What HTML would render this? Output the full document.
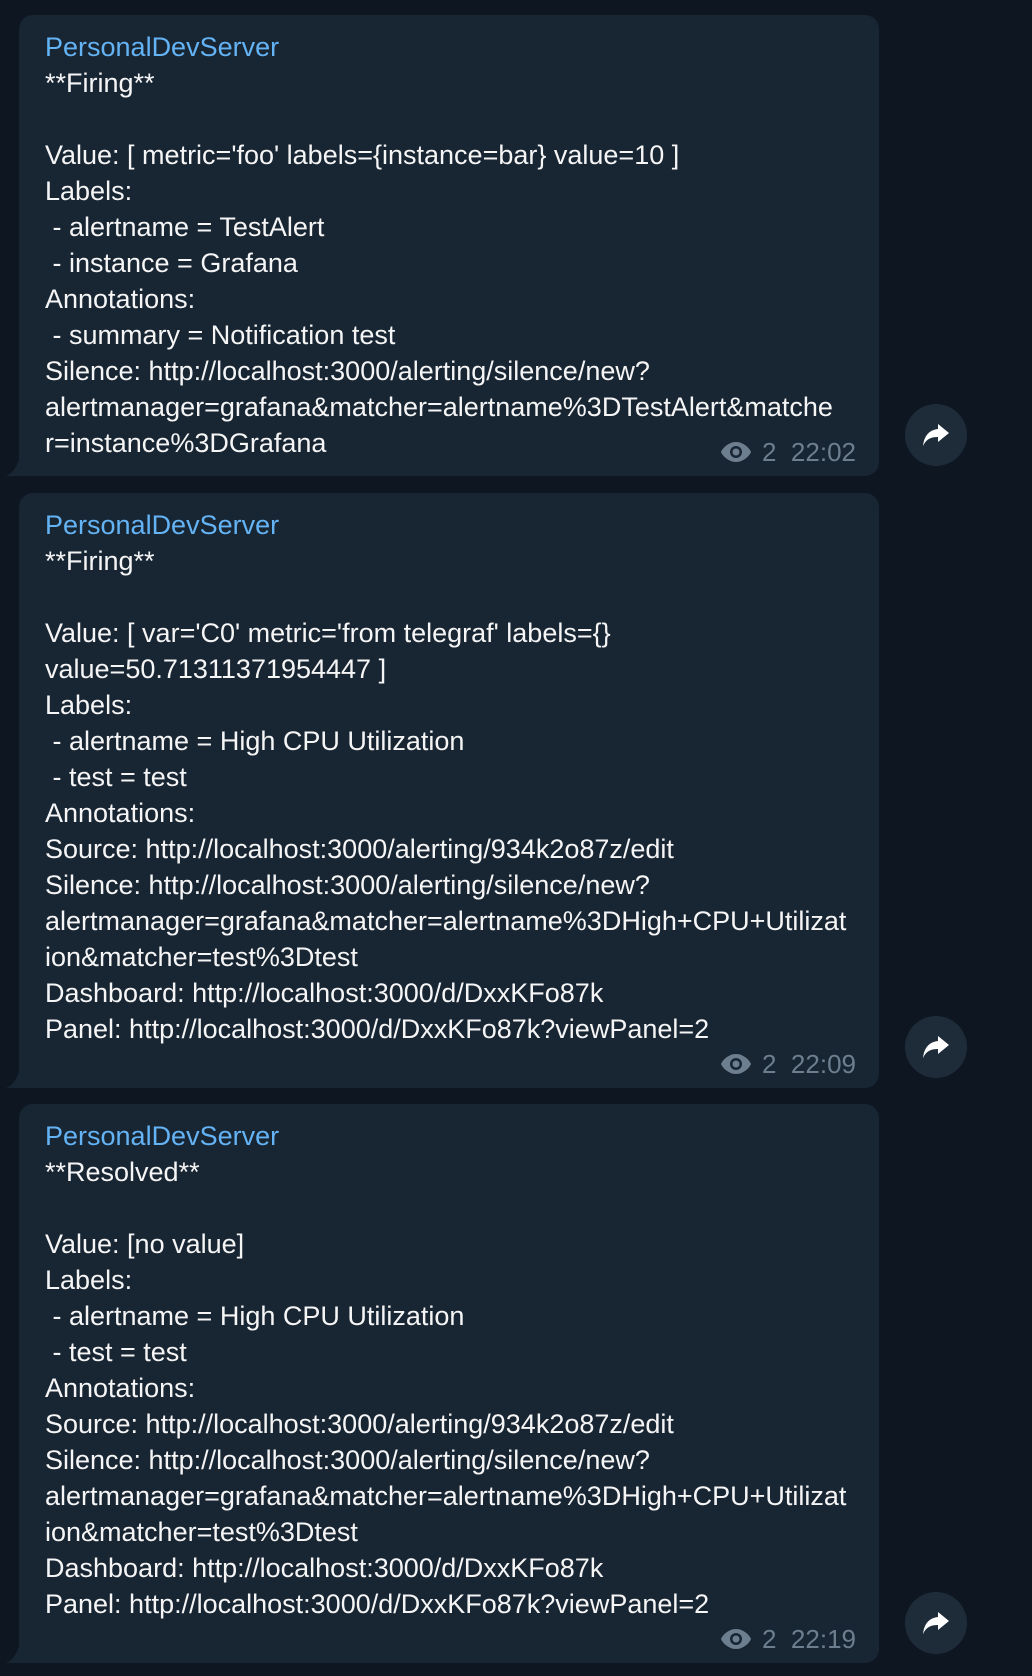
<!DOCTYPE html>
<html><head><meta charset="utf-8"><style>
html,body{margin:0;padding:0;background:#0e1621;width:1032px;height:1676px;overflow:hidden}
.b{position:absolute;left:19px;width:860px;background:#182533;border-radius:14px;border-bottom-left-radius:0;font-family:"Liberation Sans",sans-serif;font-size:27px;color:#f5f5f5}
.t{position:absolute;left:26px;top:14px;white-space:pre;line-height:36px}
.n{color:#64b3f4}
.tail{position:absolute;left:-13px;bottom:0}
.tm{position:absolute;right:23px;bottom:9px;color:#6d7f8f;font-size:26px;font-family:"Liberation Sans",sans-serif;line-height:30px;display:flex;align-items:center}
.tm svg{margin-right:10px}
.f{position:absolute;left:905px;width:62px;height:62px;border-radius:50%;background:#1e2c3a}
.f svg{position:absolute;left:17px;top:18px}
</style></head><body>

<div class="b" style="top:15px;height:461px">
<svg class="tail" width="14" height="20" viewBox="0 0 14 20"><path d="M14 0 L14 20 L0 20 Q10 16 14 0Z" fill="#182533"/></svg>
<div class="t"><span class="n">PersonalDevServer</span>
**Firing**

Value: [ metric='foo' labels={instance=bar} value=10 ]
Labels:
 - alertname = TestAlert
 - instance = Grafana
Annotations:
 - summary = Notification test
Silence: http://localhost:3000/alerting/silence/new?
alertmanager=grafana&amp;matcher=alertname%3DTestAlert&amp;matche
r=instance%3DGrafana</div>
<div class="tm"><svg width="32" height="22" viewBox="0 0 32 22"><path d="M16 1C8 1 2 8 1 11c1 3 7 10 15 10s14-7 15-10C30 8 24 1 16 1z" fill="#6d7f8f"/><circle cx="16" cy="11" r="6" fill="#182533"/><circle cx="16" cy="11" r="3.5" fill="#6d7f8f"/></svg>2&nbsp;&nbsp;22:02</div>
</div>
<div class="f" style="top:404px"><svg width="28" height="26" viewBox="0 0 28 26"><path d="M16 2 L27 11 L16 20 L16 15 C9 15 4 17 1 24 C2 14 7 8 16 7Z" fill="#fff"/></svg></div>

<div class="b" style="top:493px;height:595px">
<svg class="tail" width="14" height="20" viewBox="0 0 14 20"><path d="M14 0 L14 20 L0 20 Q10 16 14 0Z" fill="#182533"/></svg>
<div class="t"><span class="n">PersonalDevServer</span>
**Firing**

Value: [ var='C0' metric='from telegraf' labels={}
value=50.71311371954447 ]
Labels:
 - alertname = High CPU Utilization
 - test = test
Annotations:
Source: http://localhost:3000/alerting/934k2o87z/edit
Silence: http://localhost:3000/alerting/silence/new?
alertmanager=grafana&amp;matcher=alertname%3DHigh+CPU+Utilizat
ion&amp;matcher=test%3Dtest
Dashboard: http://localhost:3000/d/DxxKFo87k
Panel: http://localhost:3000/d/DxxKFo87k?viewPanel=2</div>
<div class="tm"><svg width="32" height="22" viewBox="0 0 32 22"><path d="M16 1C8 1 2 8 1 11c1 3 7 10 15 10s14-7 15-10C30 8 24 1 16 1z" fill="#6d7f8f"/><circle cx="16" cy="11" r="6" fill="#182533"/><circle cx="16" cy="11" r="3.5" fill="#6d7f8f"/></svg>2&nbsp;&nbsp;22:09</div>
</div>
<div class="f" style="top:1016px"><svg width="28" height="26" viewBox="0 0 28 26"><path d="M16 2 L27 11 L16 20 L16 15 C9 15 4 17 1 24 C2 14 7 8 16 7Z" fill="#fff"/></svg></div>

<div class="b" style="top:1104px;height:559px">
<svg class="tail" width="14" height="20" viewBox="0 0 14 20"><path d="M14 0 L14 20 L0 20 Q10 16 14 0Z" fill="#182533"/></svg>
<div class="t"><span class="n">PersonalDevServer</span>
**Resolved**

Value: [no value]
Labels:
 - alertname = High CPU Utilization
 - test = test
Annotations:
Source: http://localhost:3000/alerting/934k2o87z/edit
Silence: http://localhost:3000/alerting/silence/new?
alertmanager=grafana&amp;matcher=alertname%3DHigh+CPU+Utilizat
ion&amp;matcher=test%3Dtest
Dashboard: http://localhost:3000/d/DxxKFo87k
Panel: http://localhost:3000/d/DxxKFo87k?viewPanel=2</div>
<div class="tm"><svg width="32" height="22" viewBox="0 0 32 22"><path d="M16 1C8 1 2 8 1 11c1 3 7 10 15 10s14-7 15-10C30 8 24 1 16 1z" fill="#6d7f8f"/><circle cx="16" cy="11" r="6" fill="#182533"/><circle cx="16" cy="11" r="3.5" fill="#6d7f8f"/></svg>2&nbsp;&nbsp;22:19</div>
</div>
<div class="f" style="top:1592px"><svg width="28" height="26" viewBox="0 0 28 26"><path d="M16 2 L27 11 L16 20 L16 15 C9 15 4 17 1 24 C2 14 7 8 16 7Z" fill="#fff"/></svg></div>

</body></html>
